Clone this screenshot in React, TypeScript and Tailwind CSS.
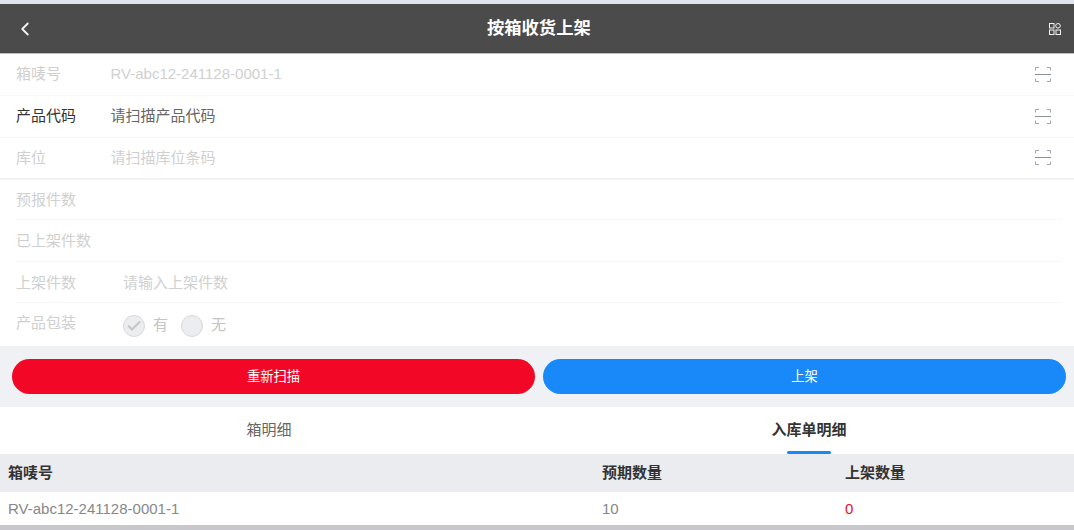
import { ChevronLeft } from "lucide-react";

const font = "font-['Liberation_Sans','Noto_Sans_CJK_SC',sans-serif]";

function ScanIcon() {
  return (
    <svg width="16" height="16" viewBox="0 0 16 16" fill="none" stroke="#9aa5b1" strokeWidth="1">
      <path d="M.5 3.5V.5H4M12 .5h3.5V3.5M.5 11.5v3H4M12 14.5h3.5V11.5" />
      <path d="M0 7.5h16" stroke="#8a929b" />
    </svg>
  );
}

function AppsIcon() {
  return (
    <svg width="12" height="12" viewBox="0 0 12 12" fill="none" stroke="#f2f2f2" strokeWidth="1">
      <rect x="0.5" y="0.5" width="4.5" height="4.5" />
      <circle cx="9" cy="2.8" r="2.3" />
      <rect x="0.5" y="7" width="4.5" height="4.5" />
      <rect x="7" y="7" width="4.5" height="4.5" />
    </svg>
  );
}

function ScanRow({ label, value, active, border }: { label: string; value: string; active?: boolean; border?: string }) {
  return (
    <div className={`flex h-[42px] items-center pl-4 pr-[23px] ${border ?? "border-b border-[#f7f7f7]"}`}>
      <span className={`w-[94.5px] text-[15px] ${active ? "text-[#333333]" : "text-[#d0d0d0]"}`}>{label}</span>
      <span className={`flex-1 text-[15px] ${active ? "text-[#666666]" : "text-[#d0d0d0]"}`}>{value}</span>
      <ScanIcon />
    </div>
  );
}

function PlainRow({ label, value, height }: { label: string; value?: string; height: string }) {
  return (
    <div className={`ml-4 mr-3 flex items-center border-b border-[#f7f7f7] pt-[2px] ${height}`}>
      <span className="w-[107px] text-[15px] text-[#d0d0d0]">{label}</span>
      {value && <span className="text-[15px] text-[#d0d0d0]">{value}</span>}
    </div>
  );
}

export default function App() {
  return (
    <div className={`flex h-[530px] w-[1074px] flex-col overflow-hidden bg-white ${font}`}>
      <div className="h-1 bg-[#dfe3ee]" />
      <header className="relative flex h-[50px] items-center justify-between border-b border-[#bdbdbd] bg-[#4b4b4b] pl-[14px] pr-[13px]">
        <ChevronLeft size={22} strokeWidth={2} className="text-[#f5f5f5]" />
        <h1 className="absolute left-[487px] text-[17.3px] font-bold text-white">按箱收货上架</h1>
        <AppsIcon />
      </header>

      <section>
        <ScanRow label="箱唛号" value="RV-abc12-241128-0001-1" />
        <ScanRow label="产品代码" value="请扫描产品代码" active />
        <ScanRow label="库位" value="请扫描库位条码" border="border-b-2 border-[#f3f3f3]" />
      </section>

      <section>
        <PlainRow label="预报件数" height="h-[40px]" />
        <PlainRow label="已上架件数" height="h-[42px]" />
        <PlainRow label="上架件数" value="请输入上架件数" height="h-[41px]" />
        <div className="ml-4 flex h-[43px] items-center">
          <span className="mb-[3px] w-[107px] text-[15px] text-[#d0d0d0]">产品包装</span>
          <div className="mt-[2px] flex items-center text-[15px] text-[#c4c4c4]">
            <span className="flex size-[22px] items-center justify-center rounded-full border border-[#d8d8d8] bg-[#ebedf0]">
              <svg width="14" height="11" viewBox="0 0 14 11" fill="none" stroke="#c6c6c6" strokeWidth="2">
                <path d="M1 5.5 5 9.5 13 1.5" />
              </svg>
            </span>
            <span className="ml-2">有</span>
            <span className="ml-[13px] size-[22px] rounded-full border border-[#d8d8d8] bg-[#ebedf0]" />
            <span className="ml-2">无</span>
          </div>
        </div>
      </section>

      <div className="flex h-[61px] items-center gap-2 bg-[#f0f1f4] pl-3 pr-2">
        <button className="h-[35px] flex-1 rounded-full bg-[#f20826] text-[13.3px] text-white">重新扫描</button>
        <button className="h-[35px] flex-1 rounded-full bg-[#1989fa] text-[13.3px] text-white">上架</button>
      </div>

      <nav className="grid h-[47px] grid-cols-[538px_542px] text-[15px]">
        <div className="flex items-center justify-center text-[#666666]">箱明细</div>
        <div className="relative flex items-center justify-center font-bold text-[#333333]">
          入库单明细
          <span className="absolute bottom-0 left-1/2 h-[3px] w-[44px] -translate-x-1/2 rounded-full bg-[#1989fa]" />
        </div>
      </nav>

      <div className="grid h-[38px] grid-cols-[594px_243px_1fr] items-center bg-[#ebecf0] pl-2 pt-px text-[15px] font-bold text-[#333333]">
        <span>箱唛号</span>
        <span>预期数量</span>
        <span>上架数量</span>
      </div>
      <div className="grid h-[33px] grid-cols-[594px_243px_1fr] items-center pl-2 pt-[2px] text-[15px] text-[#888888]">
        <span>RV-abc12-241128-0001-1</span>
        <span>10</span>
        <span className="text-[#e8112d]">0</span>
      </div>
      <div className="flex-1 bg-[#c8c8cc]" />
    </div>
  );
}
